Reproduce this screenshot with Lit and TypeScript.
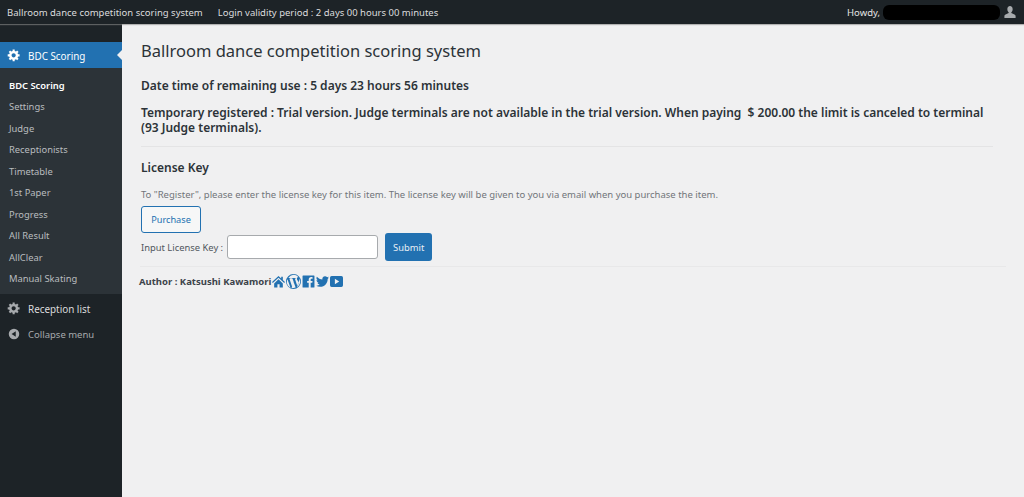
import { LitElement, html, css } from "lit";
import { customElement } from "lit/decorators.js";

const gear = html`<svg class="mi" viewBox="0 0 20 20"><path fill="currentColor" d="M18 12h-2.18c-.17.7-.44 1.35-.81 1.93l1.54 1.54-2.1 2.1-1.54-1.54c-.58.36-1.23.63-1.91.79V19H8v-2.18c-.68-.16-1.33-.43-1.91-.79l-1.54 1.54-2.12-2.12 1.54-1.54c-.36-.58-.63-1.23-.79-1.91H1V9.03h2.17c.16-.7.44-1.35.8-1.94L2.43 5.55l2.1-2.1 1.54 1.54c.58-.37 1.24-.64 1.93-.81V2h3v2.18c.68.16 1.33.43 1.91.79l1.54-1.54 2.12 2.12-1.54 1.54c.36.59.64 1.24.8 1.94H18V12zm-8.5 1.5c1.66 0 3-1.34 3-3s-1.34-3-3-3-3 1.34-3 3 1.34 3 3 3z"/></svg>`;

@customElement("app-root")
export class AppRoot extends LitElement {
  static styles = css`
    :host { display: block; height: 497px; overflow: hidden; font-family: "Noto Sans", sans-serif; background: #f0f0f1; color: #3c434a; }
    .bar { height: 24px; background: #1d2327; color: #dcdcde; font-size: 9.5px; display: flex; align-items: center; padding: 0 7px 0 7px; box-shadow: 0 1px 1px #8889; position: relative; z-index: 2; }
    .bar .login { margin-left: 15px; }
    .bar .howdy { margin-left: auto; color: #e4e4e4; }
    .redact { width: 117px; height: 15px; border-radius: 6px; background: #000; margin-left: 3px; margin-right: 3px; }
    .user { width: 14px; height: 14px; color: #a7aaad; }
    .wrap { display: flex; height: 473px; }
    .side { width: 122px; flex: none; background: #1d2327; color: #f0f0f1; font-size: 9.9px; padding-top: 18px; }
    .top { height: 26px; display: flex; align-items: center; padding-left: 7px; gap: 7px; position: relative; }
    .top span { padding-top: 1px; }
    .top.cur { background: #2271b1; color: #fff; }
    .top.cur::after { content: ""; position: absolute; right: 0; top: 8px; border: 5px solid transparent; border-right-color: #f0f0f1; border-left-width: 0; }
    .mi { width: 14px; height: 14px; flex: none; color: #a7aaad; }
    .cur .mi { color: #fff; }
    .sub { background: #2c3338; padding: 6.5px 0 4.5px; display: flex; flex-direction: column; }
    .sub div { height: 21.55px; line-height: 21.55px; padding-left: 9px; font-size: 9.4px; color: #b9bcbf; }
    .sub .on { color: #fff; font-weight: 600; }
    .plain { margin-top: 1px; color: #dcdcde; }
    .collapse { color: #a7aaad; font-size: 9.5px; height: 25px; }
    main { flex: 1; min-width: 0; padding: 0 18px 0 19px; }
    h1 { font-size: 16.5px; font-weight: 400; color: #2c3338; margin: 15px 0 0; line-height: 23px; }
    .rem { font-size: 12px; font-weight: 600; color: #2c3338; margin: 15px 0 0; line-height: 17px; }
    .tmp { font-size: 12px; font-weight: 600; color: #2c3338; margin: 12px 12px 0 0; line-height: 14.5px; }
    .hr1 { height: 1px; background: #e4e4e5; margin: 11px 13px 0 0; }
    h2 { font-size: 12px; font-weight: 600; color: #2c3338; margin: 6px 0 0; line-height: 30px; }
    .note { font-size: 9.5px; color: #70757a; margin: 6px 0 0; line-height: 12px; white-space: nowrap; }
    .btn { display: inline-flex; align-items: center; justify-content: center; box-sizing: border-box; font: inherit; border-radius: 3px; }
    .purchase { width: 60px; height: 27px; border: 1px solid #2271b1; background: #f6f7f7; color: #2271b1; font-size: 9.2px; margin-top: 5px; }
    .row { display: flex; align-items: center; font-size: 9.4px; color: #50575e; margin-top: 0; height: 28px; }
    input { width: 151px; height: 24px; box-sizing: border-box; border: 1px solid #a7aaad; border-radius: 3px; background: #fff; margin: 0 7px 0 4px; padding: 0; }
    .submit { width: 47px; height: 28px; background: #2271b1; color: #e8eef4; border: 0; font-size: 9.4px; }
    .hr2 { height: 1px; background: #e8e8e9; margin: 5px 0 0 -1px; }
    .author { display: flex; align-items: center; font-size: 9.5px; font-weight: 700; color: #3c434a; margin: 5px 0 0 -2px; height: 18px; }
    .author span { margin-right: 1px; }
    .ic { height: 13px; width: 13px; color: #2271b1; flex: none; }
    .ic.w { width: 15px; height: 15px; margin: 0 1px 0 1px; }
    .ic.tw { margin: 0 1px 0 1px; }
  `;

  render() {
    const items = ["Settings", "Judge", "Receptionists", "Timetable", "1st Paper", "Progress", "All Result", "AllClear", "Manual Skating"];
    return html`
      <div class="bar">
        <span>Ballroom dance competition scoring system</span>
        <span class="login">Login validity period : 2 days 00 hours 00 minutes</span>
        <span class="howdy">Howdy,</span>
        <div class="redact"></div>
        <svg class="user" viewBox="0 0 20 20"><path fill="currentColor" d="M10 1.500c2.300 0 3.800 1.900 3.800 4.400 0 1.800-.8 3.400-1.900 4.300v1.300l4.400 1.900c1 .5 1.700 1.200 1.700 2.300v2.800H2v-2.800c0-1.100.7-1.800 1.700-2.300l4.400-1.900v-1.300C7 9.300 6.200 7.700 6.200 5.900c0-2.500 1.500-4.400 3.800-4.400z"/></svg>
      </div>
      <div class="wrap">
        <nav class="side">
          <div class="top cur">${gear}<span>BDC Scoring</span></div>
          <div class="sub">
            <div class="on">BDC Scoring</div>
            ${items.map((i) => html`<div>${i}</div>`)}
          </div>
          <div class="top plain">${gear}<span>Reception list</span></div>
          <div class="top collapse">
            <svg class="mi" viewBox="0 0 20 20"><path fill="currentColor" d="M10 2.500a7.500 7.500 0 1 0 0 15 7.500 7.500 0 0 0 0-15zm2.500 3.500v8L6.500 10z"/></svg>
            <span>Collapse menu</span>
          </div>
        </nav>
        <main>
          <h1>Ballroom dance competition scoring system</h1>
          <p class="rem">Date time of remaining use : 5 days 23 hours 56 minutes</p>
          <p class="tmp">Temporary registered : Trial version. Judge terminals are not available in the trial version. When paying &nbsp;$ 200.00 the limit is canceled to terminal (93 Judge terminals).</p>
          <div class="hr1"></div>
          <h2>License Key</h2>
          <p class="note">To "Register", please enter the license key for this item. The license key will be given to you via email when you purchase the item.</p>
          <div class="btn purchase">Purchase</div>
          <div class="row">Input License Key :<input type="text" /><div class="btn submit">Submit</div></div>
          <div class="hr2"></div>
          <div class="author">
            <span>Author : Katsushi Kawamori</span>
            <svg class="ic" viewBox="0 0 24 24"><path fill="currentColor" d="M12 2 0 13l1.500 1.600L12 5l10.500 9.600L24 13l-4-3.700V3h-3v3.600zM4 15.500V23h6v-6h4v6h6v-7.500L12 8z"/></svg>
            <svg class="ic w" viewBox="0 0 24 24"><path fill="currentColor" d="M12 0a12 12 0 1 0 0 24 12 12 0 0 0 0-24zm0 1.300a10.700 10.700 0 0 1 7.900 3.500c-1.500 0-2.500 1.300-2.500 2.600 0 1.200.7 2.200 1.400 3.400.6 1 1.200 2.200 1.200 4l-1.600 5.300-4.300-12.800c.7 0 1.400-.1 1.400-.1.600-.1.600-1-.1-1 0 0-1.900.2-3.100.2-1.100 0-3-.2-3-.2-.7 0-.7.900-.1 1 0 0 .6.100 1.200.1l1.800 4.900-2.500 7.600L5.500 7.400c.7 0 1.400-.1 1.400-.1.600-.1.600-1-.1-1 0 0-1.900.2-3.100.2A10.700 10.700 0 0 1 12 1.300zM2.300 8.400l5 13.800A10.700 10.700 0 0 1 2.300 8.400zm9.900 4.500 3.200 8.800a10.700 10.700 0 0 1-6.500.2zm9-6.100c.9 1.600 1.500 3.300 1.500 5.200 0 3.900-2.100 7.400-5.300 9.200l3.300-9.500c.6-1.500.8-2.800.8-3.900z"/></svg>
            <svg class="ic" viewBox="0 0 24 24"><path fill="currentColor" d="M2 1h20a1 1 0 0 1 1 1v20a1 1 0 0 1-1 1h-6v-8.500h3l.5-3.500H16V8.800c0-1 .3-1.700 1.700-1.700h1.800V4c-.3 0-1.400-.1-2.600-.1-2.700 0-4.500 1.600-4.500 4.600V11H9.500v3.500h2.900V23H2a1 1 0 0 1-1-1V2a1 1 0 0 1 1-1z"/></svg>
            <svg class="ic tw" viewBox="0 0 24 24"><path fill="currentColor" d="M24 4.600c-.9.400-1.800.7-2.800.8 1-.6 1.800-1.600 2.200-2.700-1 .6-2 1-3.100 1.200A4.900 4.900 0 0 0 11.900 8.400C7.800 8.200 4.200 6.200 1.700 3.200a4.900 4.900 0 0 0 1.500 6.600c-.8 0-1.600-.2-2.200-.6v.1c0 2.400 1.700 4.400 3.900 4.800-.7.200-1.500.2-2.200.1.600 2 2.400 3.400 4.600 3.400A9.900 9.900 0 0 1 0 19.600 14 14 0 0 0 7.500 21.800c9.100 0 14.300-7.700 14-14.600 1-.7 1.800-1.600 2.500-2.600z"/></svg>
            <svg class="ic" viewBox="0 0 24 24"><path fill="currentColor" d="M3 2h18a3 3 0 0 1 3 3v14a3 3 0 0 1-3 3H3a3 3 0 0 1-3-3V5a3 3 0 0 1 3-3zm6 5v10l8-5z"/></svg>
          </div>
        </main>
      </div>
    `;
  }
}
